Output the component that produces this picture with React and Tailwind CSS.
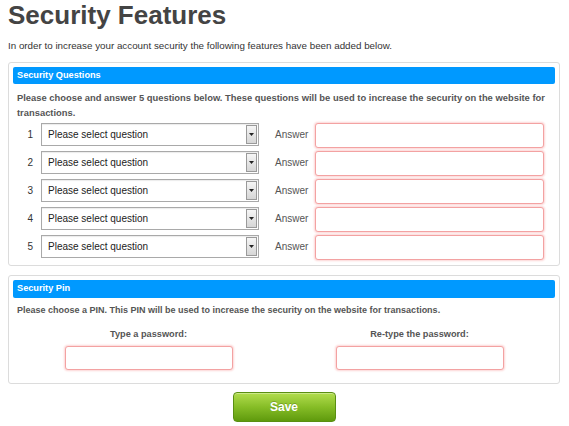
import React from "react";

function SelectBox() {
  return (
    <div className="flex h-[23px] w-[218px] items-stretch border border-[#a9a9a9] bg-white shadow-[inset_0_1px_1px_rgba(0,0,0,0.08)]">
      <div className="flex flex-1 items-center pl-[6px] text-[10px] text-[#222]">Please select question</div>
      <div className="m-[1px] flex w-[11px] items-center justify-center border border-[#9a9a9a] bg-gradient-to-b from-[#f6f6f6] to-[#d6d6d6]">
        <svg width="5" height="3" viewBox="0 0 5 3"><path d="M0 0h5L2.5 3z" fill="#222" /></svg>
      </div>
    </div>
  );
}

function PinkInput({ w, h }) {
  return (
    <div
      className={`${w} ${h} rounded-[3px] border border-[#f3a2a2] bg-white shadow-[0_0_2px_1px_#fcd6d6]`}
    />
  );
}

export default function App() {
  const rows = [1, 2, 3, 4, 5];
  return (
    <div className="w-[569px] h-[426px] bg-white px-[8px] font-['Liberation_Sans',Arial,sans-serif]">
      <h1 className="pt-[1px] text-[26px] font-bold leading-[28px] text-[#444]">Security Features</h1>
      <p className="mt-[10px] text-[9.8px] leading-[14px] text-[#333]">
        In order to increase your account security the following features have been added below.
      </p>

      <div className="mt-[9px] w-[552px] rounded-[3px] border border-[#dcdcdc] p-[4px] pb-[5px]">
        <div className="flex h-[17px] items-center rounded-[2px] bg-[#0099ff] px-[4px] text-[9.2px] font-bold text-white">
          Security Questions
        </div>
        <p className="mt-[6px] px-[4px] text-[9.4px] font-bold leading-[15px] text-[#555]">
          Please choose and answer 5 questions below. These questions will be used to increase the security on the website for transactions.
        </p>
        <div className="mt-[3px] flex flex-col gap-[3px]">
          {rows.map((n) => (
            <div key={n} className="flex items-start">
              <div className="w-[20px] pt-[5px] text-right text-[10px] leading-[13px] text-[#333]">{n}</div>
              <div className="ml-[8px]">
                <SelectBox />
              </div>
              <div className="ml-[16px] w-[40px] pt-[5px] text-[10px] leading-[13px] text-[#555]">Answer</div>
              <PinkInput w="w-[229px]" h="h-[25px]" />
            </div>
          ))}
        </div>
      </div>

      <div className="mt-[9px] w-[552px] rounded-[3px] border border-[#dcdcdc] p-[4px] pb-[13px]">
        <div className="flex h-[18px] items-center rounded-[2px] bg-[#0099ff] px-[4px] text-[9.2px] font-bold text-white">
          Security Pin
        </div>
        <p className="mt-[5px] px-[4px] text-[9px] font-bold leading-[15px] text-[#555]">
          Please choose a PIN. This PIN will be used to increase the security on the website for transactions.
        </p>
        <div className="mt-[10px] grid grid-cols-2">
          <div className="flex flex-col items-center">
            <div className="text-[9.2px] font-bold leading-[13px] text-[#555]">Type a password:</div>
            <div className="mt-[5px]"><PinkInput w="w-[168px]" h="h-[24px]" /></div>
          </div>
          <div className="flex flex-col items-center">
            <div className="text-[9.2px] font-bold leading-[13px] text-[#555]">Re-type the password:</div>
            <div className="mt-[5px]"><PinkInput w="w-[168px]" h="h-[24px]" /></div>
          </div>
        </div>
      </div>

      <div className="mt-[8px] flex w-[552px] justify-center">
        <button className="flex h-[30px] w-[103px] items-center justify-center rounded-[4px] border border-[#5a8f12] bg-gradient-to-b from-[#b2dd4c] via-[#86bd26] to-[#5f9a0c] text-[12px] font-bold text-white [text-shadow:0_-1px_0_rgba(0,0,0,0.2)] shadow-[inset_0_1px_0_rgba(255,255,255,0.35)]">
          Save
        </button>
      </div>
    </div>
  );
}
